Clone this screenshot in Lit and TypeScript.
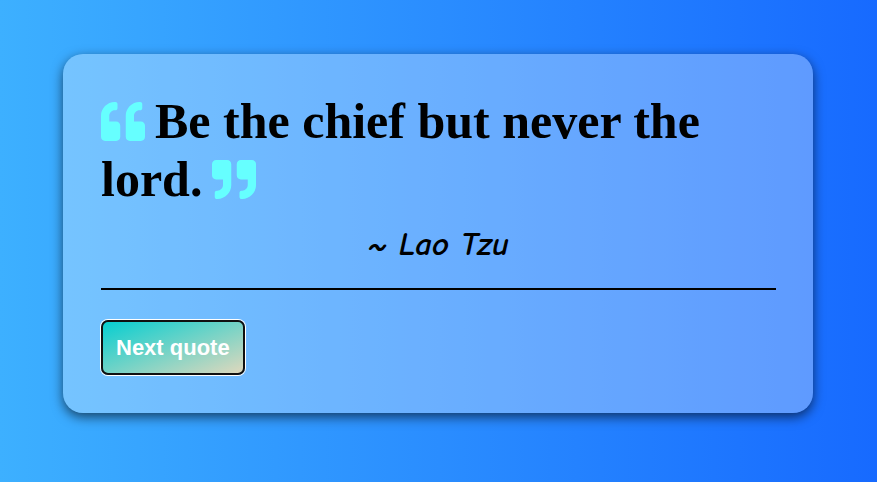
import { LitElement, html, css, svg } from "lit";
import { customElement, state } from "lit/decorators.js";

const quoteLeft = svg`<path d="M464 256h-80v-64c0-35.3 28.7-64 64-64h8c13.3 0 24-10.7 24-24V56c0-13.3-10.7-24-24-24h-8c-88.4 0-160 71.6-160 160v240c0 26.5 21.5 48 48 48h128c26.5 0 48-21.5 48-48V304c0-26.5-21.5-48-48-48zm-288 0H96v-64c0-35.3 28.7-64 64-64h8c13.3 0 24-10.7 24-24V56c0-13.3-10.7-24-24-24h-8C71.6 32 0 103.6 0 192v240c0 26.5 21.5 48 48 48h128c26.5 0 48-21.5 48-48V304c0-26.5-21.5-48-48-48z"/>`;
const quoteRight = svg`<path d="M464 32H336c-26.5 0-48 21.5-48 48v128c0 26.5 21.5 48 48 48h80v64c0 35.3-28.7 64-64 64h-8c-13.3 0-24 10.7-24 24v48c0 13.3 10.7 24 24 24h8c88.4 0 160-71.6 160-160V80c0-26.5-21.5-48-48-48zm-288 0H48C21.5 32 0 53.5 0 80v128c0 26.5 21.5 48 48 48h80v64c0 35.3-28.7 64-64 64h-8c-13.3 0-24 10.7-24 24v48c0 13.3 10.7 24 24 24h8c88.4 0 160-71.6 160-160V80c0-26.5-21.5-48-48-48z"/>`;

interface Quote {
  text: string;
  author: string;
}

@customElement("app-root")
export class AppRoot extends LitElement {
  @state() private quote: Quote = {
    text: "Be the chief but never the lord.",
    author: "Lao Tzu",
  };

  static styles = css`
    :host {
      display: flex;
      justify-content: center;
      align-items: flex-start;
      box-sizing: border-box;
      min-height: 100vh;
      padding: 54px 25px 54px 24px;
      background: linear-gradient(to right, #3db0ff, #176aff);
      color: #000;
    }
    .card {
      box-sizing: border-box;
      width: 100%;
      max-width: 750px;
      padding: 38px 37px 38px 38px;
      border-radius: 20px;
      background: rgba(255, 255, 255, 0.3);
      box-shadow: 0 4px 12px rgba(0, 0, 0, 0.6);
    }
    .quote {
      margin: 0;
      font: bold 50px/58px "Liberation Serif", "Times New Roman", serif;
    }
    .mark {
      width: 44px;
      height: 39px;
      vertical-align: -3px;
      fill: #66ffff;
    }
    .open {
      margin-right: 10px;
    }
    .close {
      margin-left: 10px;
    }
    .author {
      margin: 14px 0 0;
      padding-bottom: 22px;
      border-bottom: 2px solid #000;
      font: italic bold 33px/44px "Comic Sans MS", "Comic Neue", "Noto Sans", sans-serif;
      text-align: center;
    }
    .next {
      display: block;
      margin-top: 30px;
      padding: 12px 13px;
      border: 2px solid #101010;
      border-radius: 7px;
      background: linear-gradient(to bottom right, #00ced1, #e4d8bc) border-box;
      box-shadow: 0 0 0 1px #fff;
      color: #fff;
      font: bold 22px/27px "Liberation Sans", Arial, sans-serif;
      cursor: pointer;
    }
  `;

  render() {
    return html`
      <main class="card">
        <h1 class="quote"><svg class="mark open" viewBox="0 32 512 448" preserveAspectRatio="none" aria-hidden="true">${quoteLeft}</svg>${this.quote.text}<svg class="mark close" viewBox="0 32 512 448" preserveAspectRatio="none" aria-hidden="true">${quoteRight}</svg></h1>
        <p class="author">~ ${this.quote.author}</p>
        <button class="next" type="button">Next quote</button>
      </main>
    `;
  }
}
